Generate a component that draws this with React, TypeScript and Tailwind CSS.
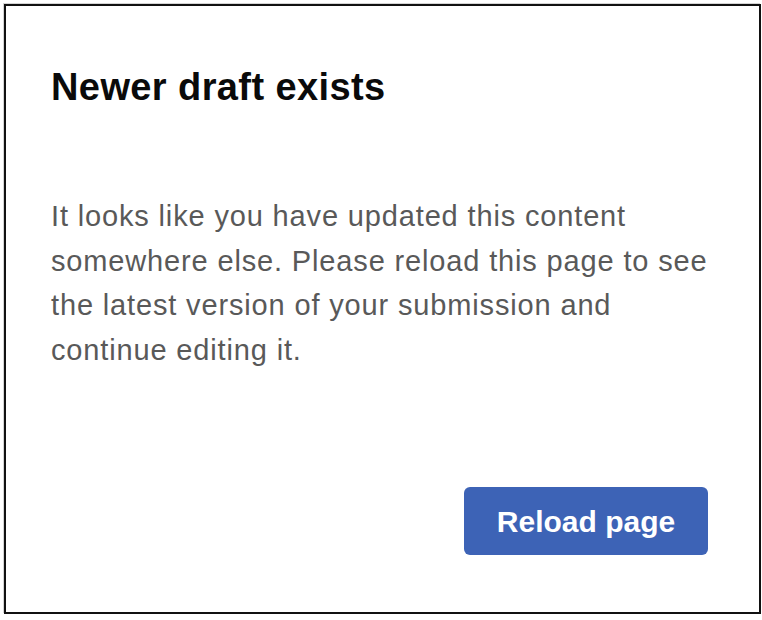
export default function App() {
  return (
    <div className="min-h-[620px] w-[762px] bg-white pl-[4px] pt-[4px] font-['Liberation_Sans',Arial,sans-serif]">
      <div className="flex h-[610px] w-[757px] flex-col border-2 border-[#111] pl-[45px] pt-[58px] shadow-[-1px_-1px_0_#d4d4d4]">
        <h1 className="text-[38px] leading-[46px] font-bold tracking-[0.4px] text-[#0a0a0a]">Newer draft exists</h1>
        <p className="mt-[84px] w-[665px] text-[29px] leading-[44.5px] tracking-[0.85px] text-[#595959]">
          It looks like you have updated this content somewhere else. Please reload this page to see the latest version of your submission and continue editing it.
        </p>
        <div className="mt-[115px] flex justify-end pr-[51px]">
          <button className="flex h-[68px] w-[244px] items-center justify-center rounded-[6px] bg-[#3d63b6] text-[30px] font-bold text-white">
            Reload page
          </button>
        </div>
      </div>
    </div>
  );
}
